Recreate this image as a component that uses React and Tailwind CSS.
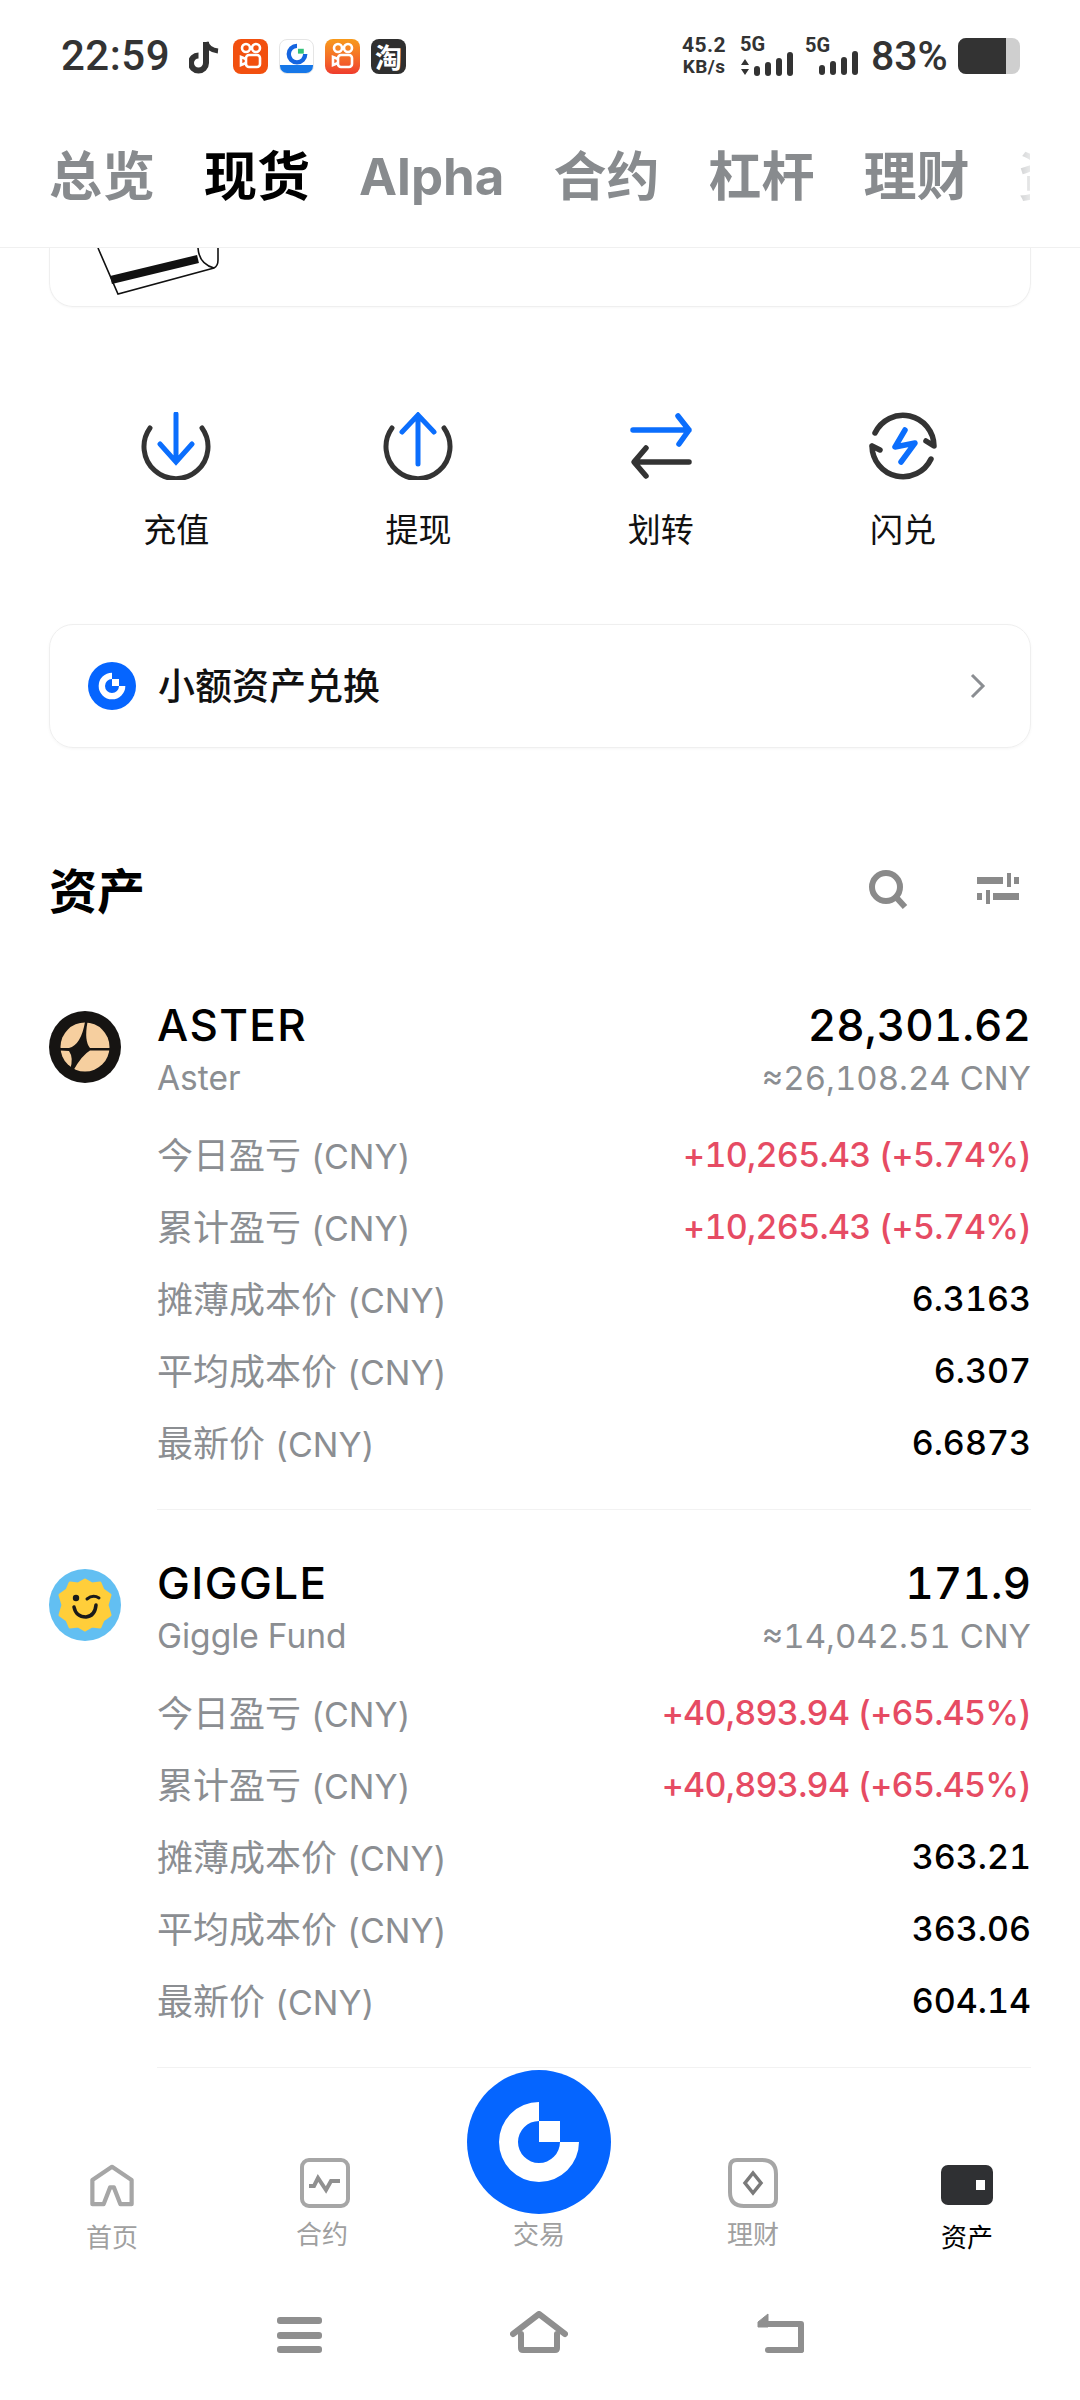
import React from 'react'

const FONT = "font-['Inter','Noto_Sans_CJK_SC',sans-serif]"

const assets = [
  {
    symbol: 'ASTER',
    name: 'Aster',
    amount: '28,301.62',
    cny: '≈26,108.24 CNY',
    today: '+10,265.43 (+5.74%)',
    total: '+10,265.43 (+5.74%)',
    diluted: '6.3163',
    average: '6.307',
    last: '6.6873',
    icon: <AsterIcon />,
  },
  {
    symbol: 'GIGGLE',
    name: 'Giggle Fund',
    amount: '171.9',
    cny: '≈14,042.51 CNY',
    today: '+40,893.94 (+65.45%)',
    total: '+40,893.94 (+65.45%)',
    diluted: '363.21',
    average: '363.06',
    last: '604.14',
    icon: <GiggleIcon />,
  },
]

function AsterIcon() {
  return (
    <svg width="72" height="72" viewBox="0 0 72 72">
      <circle cx="36" cy="36" r="36" fill="#161412" />
      <circle cx="36" cy="36" r="24.5" fill="#F6CF9F" />
      <path d="M36 11 L38.5 11 Q35 30 41 37 L61 37 L61 39.5 L41 39.5 Q33 44 24 60 L21 59 Q25 47 20 40 L11 39.5 L11 37 L20 37 Q32 34 36 11 Z" fill="#161412" />
    </svg>
  )
}

function GiggleIcon() {
  return (
    <svg width="72" height="72" viewBox="0 0 72 72">
      <circle cx="36" cy="36" r="36" fill="#62BFF2" />
      <path d="M36 11 L43 15 L51 14 L54 21 L61 26 L58 36 L61 46 L54 51 L51 58 L43 57 L36 61 L29 57 L21 58 L18 51 L11 46 L14 36 L11 26 L18 21 L21 14 L29 15 Z" fill="#FFCE3A" stroke="#FFCE3A" strokeWidth="3" strokeLinejoin="round" />
      <circle cx="27" cy="29" r="3.2" fill="#1a1a1a" />
      <path d="M38 30 Q44 25 50 29" fill="none" stroke="#1a1a1a" strokeWidth="3" strokeLinecap="round" />
      <path d="M25 38 Q27 48 37 48 Q46 47 47 36" fill="none" stroke="#1a1a1a" strokeWidth="3.5" strokeLinecap="round" />
    </svg>
  )
}

function BrandMark({ size }) {
  return (
    <svg width={size} height={size} viewBox="0 0 144 144">
      <circle cx="72" cy="72" r="72" fill="#0565FF" />
      <path d="M72 32 A40 40 0 1 0 112 72 H93 A21 21 0 1 1 72 51 Z" fill="#fff" />
      <rect x="72" y="51" width="21" height="21" fill="#fff" />
    </svg>
  )
}

function KuaishouIcon({ gradient }) {
  return (
    <div className={`w-[35px] h-[35px] rounded-[8px] flex items-center justify-center ${gradient}`}>
      <svg width="26" height="28" viewBox="0 0 26 28" fill="none" stroke="#fff" strokeWidth="2.6">
        <circle cx="8" cy="6" r="4" />
        <circle cx="18" cy="6" r="4" />
        <rect x="8" y="13" width="14" height="12" rx="3" />
        <path d="M8 17 L3 15 V23 L8 21" />
      </svg>
    </div>
  )
}

function StatusBar() {
  return (
    <div className="h-[112px] pt-[37px] pl-[61px] pr-[60px] flex items-start justify-between shrink-0">
      <div className="flex items-center h-[38px]">
        <span className="text-[42px] leading-[38px] font-medium text-[#333] w-[128px] font-['Roboto',sans-serif] tracking-[0.5px]">22:59</span>
        <svg width="31" height="35" viewBox="0 0 31 35" className="mr-[13px]">
          <path d="M17 3 V24 A7.5 7.5 0 1 1 9.5 16.5" fill="none" stroke="#333" strokeWidth="6" />
          <path d="M17 3 Q19 11 29 12" fill="none" stroke="#333" strokeWidth="5" />
        </svg>
        <div className="flex gap-[11px]">
          <KuaishouIcon gradient="bg-[#F2500F]" />
          <div className="w-[35px] h-[35px] rounded-[8px] bg-white border border-[#e5e5e5] overflow-hidden flex flex-col items-center">
            <svg width="24" height="24" viewBox="0 0 24 24" className="mt-[2px]">
              <path d="M12 4 A8.5 8.5 0 1 0 20.5 12.5" fill="none" stroke="#1565E0" strokeWidth="4.5" />
              <rect x="13" y="7" width="6" height="5" fill="#33C27A" />
            </svg>
            <div className="w-full h-[8px] bg-[#1677E8] mt-auto"></div>
          </div>
          <KuaishouIcon gradient="bg-gradient-to-b from-[#F79A1B] to-[#EF3B2D]" />
          <div className="w-[35px] h-[35px] rounded-[8px] bg-[#2f2f2f] text-white text-[27px] leading-[35px] text-center font-bold font-['Noto_Sans_CJK_SC',sans-serif]">淘</div>
        </div>
      </div>

      <div className="flex items-center h-[38px] text-[#333] font-['Roboto',sans-serif]">
        <div className="w-[50px] flex flex-col items-center font-bold text-[21px] leading-[21px] tracking-[0.4px]">
          <span>45.2</span>
          <span className="text-[19px]">KB/s</span>
        </div>
        <div className="ml-[11px] w-[57px]">
          <div className="text-[20px] leading-[16px] font-bold">5G</div>
          <div className="flex items-end gap-[5px] h-[24px]">
            <svg width="10" height="18" viewBox="0 0 10 18" className="-mr-[1px]"><path d="M5 1 L9 7 H1 Z M1 11 H9 L5 17 Z" fill="#333" /></svg>
            <Bars />
          </div>
        </div>
        <div className="ml-[8px] w-[54px]">
          <div className="text-[20px] leading-[16px] font-bold mb-[-2px]">5G</div>
          <div className="flex items-end gap-[5px] h-[24px] pl-[14px]">
            <Bars />
          </div>
        </div>
        <span className="ml-[12px] text-[41px] leading-[38px] w-[87px] font-medium">83%</span>
        <div className="w-[62px] h-[36px] rounded-[8px] overflow-hidden bg-[#cfcfcf] flex">
          <div className="w-[48px] h-full bg-[#333]"></div>
        </div>
      </div>
    </div>
  )
}

function Bars() {
  return (
    <>
      {[10, 14, 18, 24].map((h, i) => (
        <div key={i} className="w-[6px] rounded-[3px] bg-[#333]" style={{ height: h }}></div>
      ))}
    </>
  )
}

function Tabs() {
  const tabs = ['总览', '现货', 'Alpha', '合约', '杠杆', '理财', '资金']
  return (
    <div className="relative h-[136px] border-b border-[#f0f0f0] shrink-0 bg-white">
      <div className="ml-[49px] mr-[50px] pt-[29px] overflow-hidden flex gap-[49px] text-[53px] leading-[72px] font-bold whitespace-nowrap">
        {tabs.map(t => (
          <span key={t} className={`${t === '现货' ? 'text-black' : 'text-[#888b8e]'} ${t === 'Alpha' ? 'text-[51px]' : ''}`}>{t}</span>
        ))}
      </div>
      <div className="absolute top-0 bottom-0 right-[50px] w-[12px] bg-gradient-to-r from-white/60 to-white/80"></div>
    </div>
  )
}

function ActionIcon({ type }) {
  const dark = '#333'
  const blue = '#0B6EFD'
  if (type === 'in' || type === 'out') {
    return (
      <svg width="70" height="68" viewBox="0 0 70 68" fill="none" strokeWidth="5" strokeLinecap="round">
        <path d="M9 16 A32 32 0 1 0 61 16" stroke={dark} />
        {type === 'in'
          ? <path d="M35 2 V48 M19 32 L35 50 L51 32" stroke={blue} />
          : <path d="M35 52 V4 M19 20 L35 3 L51 20" stroke={blue} />}
      </svg>
    )
  }
  if (type === 'swap') {
    return (
      <svg width="70" height="68" viewBox="0 0 70 68" fill="none" strokeWidth="5.5" strokeLinecap="round" strokeLinejoin="round">
        <path d="M7 18 H63 M52 4 L63 18 L53 32" stroke={blue} />
        <path d="M63 50 H9 M20 36 L8 50 L20 64" stroke={dark} />
      </svg>
    )
  }
  return (
    <svg width="70" height="68" viewBox="0 0 70 68" fill="none" strokeWidth="5.5" strokeLinecap="round" strokeLinejoin="round">
      <path d="M7 21 A31 31 0 0 1 66 34 L58 29" stroke={dark} />
      <path d="M4 34 A31 31 0 0 0 63 47 M4 34 L12 38" stroke={dark} />
      <path d="M37 18 L27 35 L47 31 L33 50" stroke={blue} />
    </svg>
  )
}

function AssetBlock({ asset, last }) {
  const rows = [
    ['今日盈亏', asset.today, true],
    ['累计盈亏', asset.total, true],
    ['摊薄成本价', asset.diluted],
    ['平均成本价', asset.average],
    ['最新价', asset.last],
  ]
  return (
    <div className={`flex ${last ? '' : 'mb-[47px]'}`}>
      <div className="w-[108px] shrink-0 pt-[12px]">{asset.icon}</div>
      <div className="flex-1 border-b border-[#f2f2f2] pb-[29px] tabular-nums">
        <div className="flex justify-between items-center h-[52px] text-[44px] leading-[52px] font-medium text-black">
          <span className="tracking-[1.4px]">{asset.symbol}</span>
          <span>{asset.amount}</span>
        </div>
        <div className="flex justify-between items-center h-[44px] mt-[5px] text-[#8b8e92] leading-[44px] mb-[20px]">
          <span className="text-[33.5px]">{asset.name}</span>
          <span className="text-[33px]">{asset.cny}</span>
        </div>
        {rows.map(([label, value, profit]) => (
          <div key={label} className="flex justify-between items-center h-[72px]">
            <span className="text-[36px] text-[#8b8e92]">{label} <span className="text-[34px]">(CNY)</span></span>
            <span className={`text-[34px] font-medium pb-[4px] ${profit ? 'text-[#E64B63] tracking-[-0.7px]' : 'text-black'}`}>{value}</span>
          </div>
        ))}
      </div>
    </div>
  )
}

function BottomNav() {
  const gray = '#a6a6a6'
  return (
    <div className="relative h-[325px] bg-white shrink-0">
      <div className="absolute top-[-5px] left-[467px]">
        <BrandMark size={144} />
      </div>

      <div className="flex h-[179px] text-[26px] leading-[32px] text-[#a0a0a0]">
        <div className="w-[120px] ml-[52px] flex flex-col items-center pt-[89px]">
          <svg width="48" height="46" viewBox="0 0 48 46" fill="none" stroke={gray} strokeWidth="4.5" strokeLinejoin="round">
            <path d="M3 43 V17 L24 3 L45 17 V43 H33 L26 25 H22 L15 43 Z" />
          </svg>
          <span className="mt-[15px]">首页</span>
        </div>
        <div className="w-[120px] ml-[90px] flex flex-col items-center pt-[83px]">
          <svg width="50" height="50" viewBox="0 0 50 50" fill="none" className="ml-[6px]">
            <rect x="2" y="2" width="46" height="46" rx="7" stroke={gray} strokeWidth="4" />
            <path d="M9 28 H14 L18 20 L26 32 L31 23 H40" stroke="#909090" strokeWidth="4" />
          </svg>
          <span className="mt-[11px]">合约</span>
        </div>
        <div className="w-[120px] ml-[97px] flex flex-col items-center pt-[144px]">
          <span>交易</span>
        </div>
        <div className="w-[120px] ml-[94px] flex flex-col items-center pt-[83px]">
          <svg width="50" height="50" viewBox="0 0 50 50" fill="none">
            <path d="M9 2 H34 Q48 2 48 16 V41 Q48 48 41 48 H16 Q2 48 2 34 V9 Q2 2 9 2 Z" stroke={gray} strokeWidth="4" />
            <path d="M25 15 L33 25 L25 35 L17 25 Z" stroke="#7a7a7a" strokeWidth="3.5" />
          </svg>
          <span className="mt-[11px]">理财</span>
        </div>
        <div className="w-[120px] ml-[94px] flex flex-col items-center pt-[90px]">
          <div className="w-[52px] h-[43px] rounded-[7px] bg-[#2f3033] flex items-center justify-end pr-[8px]">
            <div className="w-[9px] h-[10px] bg-white"></div>
          </div>
          <span className="mt-[17px] text-black">资产</span>
        </div>
      </div>

      <div className="mt-[63px] flex justify-center items-start gap-[188px]">
        <div className="w-[45px] h-[36px] flex flex-col justify-between">
          <div className="h-[7px] rounded-[3px] bg-[#8f8f8f]"></div>
          <div className="h-[7px] rounded-[3px] bg-[#8f8f8f]"></div>
          <div className="h-[7px] rounded-[3px] bg-[#8f8f8f]"></div>
        </div>
        <svg width="58" height="42" viewBox="0 0 58 42" fill="none" stroke="#8f8f8f" strokeWidth="6" strokeLinecap="round" strokeLinejoin="round" className="-mt-[6px]">
          <path d="M3 23 L29 3 L55 23" />
          <path d="M11 23 V37 Q11 39 13 39 H45 Q47 39 47 37 V23" />
        </svg>
        <svg width="48" height="42" viewBox="0 0 48 42" fill="none" stroke="#8f8f8f" strokeWidth="6" strokeLinejoin="round" className="-mt-[6px]">
          <path d="M45 39 V13 H8" strokeLinecap="round" />
          <path d="M45 39 H12" strokeLinecap="round" />
          <path d="M12 3 L2 11 V16 H12 Z" fill="#8f8f8f" strokeWidth="1" />
        </svg>
      </div>
    </div>
  )
}

export default function App() {
  const actions = [
    ['in', '充值'],
    ['out', '提现'],
    ['swap', '划转'],
    ['flash', '闪兑'],
  ]

  return (
    <div className={`w-[1080px] h-[2400px] bg-white flex flex-col overflow-hidden ${FONT}`}>
      <StatusBar />
      <Tabs />

      <div className="flex-1 overflow-hidden px-[49px]">
        {/* card scrolled under the tabs */}
        <div className="h-[59px] border border-t-0 border-[#efefef] rounded-b-[24px] pl-[46px] overflow-hidden shadow-[0_1px_2px_rgba(0,0,0,0.03)]">
          <svg width="126" height="48" viewBox="0 0 126 48" fill="none" stroke="#111" strokeWidth="1.6">
            <path d="M2 0 L22 46 L118 20 Q122 18 122 12 V0" />
            <path d="M15 32 L102 11" strokeWidth="8" />
            <path d="M102 0 Q103 16 118 20" />
          </svg>
        </div>

        <div className="mt-[105px] grid grid-cols-4 pl-[6px] pr-[7px]">
          {actions.map(([type, label]) => (
            <div key={label} className="flex flex-col items-center">
              <ActionIcon type={type} />
              <span className="mt-[30px] text-[33px] leading-[40px] text-[#111]">{label}</span>
            </div>
          ))}
        </div>

        <div className="mt-[74px] h-[124px] rounded-[24px] border border-[#efefef] shadow-[0_1px_3px_rgba(0,0,0,0.04)] pl-[38px] pr-[44px] flex items-center justify-between">
          <div className="flex items-center gap-[22px]">
            <BrandMark size={48} />
            <span className="text-[37px] leading-[48px] pt-[2px] font-medium text-[#111]">小额资产兑换</span>
          </div>
          <svg width="16" height="26" viewBox="0 0 16 26" fill="none" stroke="#8b8e92" strokeWidth="3">
            <path d="M2 2 L13 13 L2 24" />
          </svg>
        </div>

        <div className="mt-[114px] h-[60px] flex items-center justify-between">
          <span className="text-[48px] font-bold text-black">资产</span>
          <div className="flex items-center gap-[69px] pr-[12px] -mt-[7px]">
            <svg width="40" height="40" viewBox="0 0 40 40" fill="none" stroke="#8a8a8a" strokeWidth="6">
              <circle cx="18" cy="18" r="14" />
              <path d="M27 27 L37 38" />
            </svg>
            <svg width="42" height="32" viewBox="0 0 42 32" fill="#8a8a8a">
              <rect x="0" y="4" width="26" height="7" />
              <rect x="30" y="0" width="4" height="14" />
              <rect x="37" y="4" width="5" height="7" />
              <rect x="0" y="20" width="5" height="7" />
              <rect x="9" y="17" width="4" height="14" />
              <rect x="16" y="20" width="26" height="7" />
            </svg>
          </div>
        </div>

        <div className="mt-[77px]">
          {assets.map((a, i) => (
            <AssetBlock key={a.symbol} asset={a} last={i === assets.length - 1} />
          ))}
        </div>
      </div>

      <BottomNav />
    </div>
  )
}
